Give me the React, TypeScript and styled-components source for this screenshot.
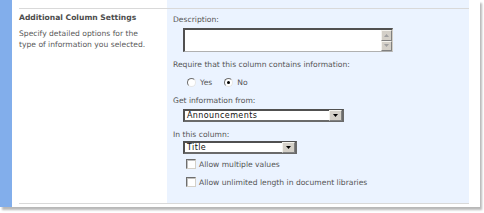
import styled, { createGlobalStyle } from "styled-components";

const GlobalStyle = createGlobalStyle`
  html, body {
    margin: 0;
    padding: 0;
    background: #ffffff;
  }
  body {
    font-family: "DejaVu Sans", Verdana, sans-serif;
    font-size: 7.6px;
    color: #555555;
  }
`;

const Page = styled.div`
  width: 484px;
  height: 213px;
  overflow: hidden;
`;

const Frame = styled.div`
  width: 480px;
  height: 207px;
  display: flex;
  background: #ffffff;
  box-shadow: 2px 3px 2px rgba(0, 0, 0, 0.28);
`;

const Stripe = styled.div`
  width: 12px;
  background: #82aeeb;
`;

const Body = styled.div`
  flex: 1;
  display: flex;
  flex-direction: column;
  padding: 0 11px 0 7px;
`;

const Row = styled.div`
  display: flex;
  height: ${(p) => (p.$height ? `${p.$height}px` : "auto")};
`;

const Section = styled.div`
  display: flex;
  border-top: 1px solid #d9d9d9;
  border-bottom: 1px solid #d9d9d9;
  flex: 1;
`;

const LeftCell = styled.div`
  width: 148px;
  flex-shrink: 0;
  padding-top: 3px;
`;

const RightCell = styled.div`
  width: 302px;
  flex-shrink: 0;
  background: #ebf3ff;
  padding: 5px 0 0 6px;
  box-sizing: border-box;
`;

const Heading = styled.div`
  font-weight: bold;
  color: #4c4c4c;
  line-height: 11px;
`;

const Help = styled.div`
  margin-top: 5px;
  line-height: 11px;
  color: #5a5a5a;
`;

const Label = styled.div`
  line-height: 11px;
  margin-top: ${(p) => p.$top ?? 0}px;
`;

const Indent = styled.div`
  margin-left: ${(p) => p.$left ?? 10}px;
  margin-top: ${(p) => p.$top ?? 0}px;
`;

const TextArea = styled.div`
  width: 210px;
  height: 24px;
  box-sizing: border-box;
  background: #ffffff;
  border-top: 2px solid #505050;
  border-left: 2px solid #505050;
  border-right: 1px solid #d4d0c8;
  border-bottom: 1px solid #b0b0b0;
  display: flex;
  justify-content: flex-end;
`;

const ScrollBar = styled.div`
  width: 11px;
  display: flex;
  flex-direction: column;
`;

const ScrollButton = styled.div`
  flex: 1;
  background: #d4d0c8;
  border: 1px solid;
  border-color: #f4f3ee #808080 #808080 #f4f3ee;
  display: flex;
  align-items: center;
  justify-content: center;
`;

const RadioRow = styled.div`
  display: flex;
  align-items: center;
  height: 12px;
  margin: 6px 0 0 14px;
  gap: 4px;
`;

const Radio = styled.span`
  width: 9px;
  height: 9px;
  border-radius: 50%;
  box-sizing: border-box;
  background: #ffffff;
  border: 1px solid;
  border-color: #6e6e6e #e6e6e6 #e6e6e6 #6e6e6e;
  display: flex;
  align-items: center;
  justify-content: center;
  &::after {
    content: "";
    width: 3px;
    height: 3px;
    border-radius: 50%;
    background: ${(p) => (p.$checked ? "#000000" : "transparent")};
  }
`;

const RadioText = styled.span`
  margin-right: 8px;
`;

const Select = styled.div`
  width: ${(p) => p.$width}px;
  height: 13px;
  box-sizing: border-box;
  background: #ffffff;
  border: 2px solid;
  border-color: #505050 #6a6a6a #6a6a6a #505050;
  display: flex;
  align-items: center;
  justify-content: space-between;
  color: #111111;
  font-size: 8px;
  font-weight: 400;
  letter-spacing: 0.4px;
  padding-left: 2px;
`;

const SelectButton = styled.div`
  width: 11px;
  height: 9px;
  background: #d4d0c8;
  border: 1px solid;
  border-color: #f4f3ee #808080 #808080 #f4f3ee;
  display: flex;
  align-items: center;
  justify-content: center;
`;

const CheckRow = styled.div`
  display: flex;
  align-items: center;
  gap: 3px;
  height: 10px;
  margin: ${(p) => p.$top}px 0 0 13px;
`;

const Check = styled.span`
  width: 10px;
  height: 10px;
  box-sizing: border-box;
  background: #ffffff;
  border: 1px solid;
  border-color: #6e6e6e #d4d0c8 #d4d0c8 #6e6e6e;
  box-shadow: inset 1px 1px #c0c0c0;
`;

const Gap = styled.div`
  height: 3px;
`;

function Arrow({ down, color = "#000" }: { down?: boolean; color?: string }) {
  return (
    <svg width="5" height="3" viewBox="0 0 5 3">
      <polygon points={down ? "0,0 5,0 2.5,3" : "0,3 5,3 2.5,0"} fill={color} />
    </svg>
  );
}

export default function App() {
  return (
    <Page>
      <GlobalStyle />
      <Frame>
        <Stripe />
        <Body>
          <Row $height={8}>
            <LeftCell />
            <RightCell />
          </Row>
          <Section>
            <LeftCell>
              <Heading>Additional Column Settings</Heading>
              <Help>
                Specify detailed options for the
                <br />
                type of information you selected.
              </Help>
            </LeftCell>
            <RightCell>
              <Label>Description:</Label>
              <Indent $top={3}>
                <TextArea>
                  <ScrollBar>
                    <ScrollButton>
                      <Arrow color="#a0a0a0" />
                    </ScrollButton>
                    <ScrollButton>
                      <Arrow down color="#a0a0a0" />
                    </ScrollButton>
                  </ScrollBar>
                </TextArea>
              </Indent>
              <Label $top={7}>Require that this column contains information:</Label>
              <RadioRow>
                <Radio />
                <RadioText>Yes</RadioText>
                <Radio $checked />
                <RadioText>No</RadioText>
              </RadioRow>
              <Label $top={7}>Get information from:</Label>
              <Indent $top={3}>
                <Select $width={161}>
                  Announcements
                  <SelectButton>
                    <Arrow down />
                  </SelectButton>
                </Select>
              </Indent>
              <Label $top={7}>In this column:</Label>
              <Indent $top={1}>
                <Select $width={114}>
                  Title
                  <SelectButton>
                    <Arrow down />
                  </SelectButton>
                </Select>
              </Indent>
              <CheckRow $top={5}>
                <Check />
                Allow multiple values
              </CheckRow>
              <CheckRow $top={8}>
                <Check />
                Allow unlimited length in document libraries
              </CheckRow>
            </RightCell>
          </Section>
          <Gap />
        </Body>
      </Frame>
    </Page>
  );
}
